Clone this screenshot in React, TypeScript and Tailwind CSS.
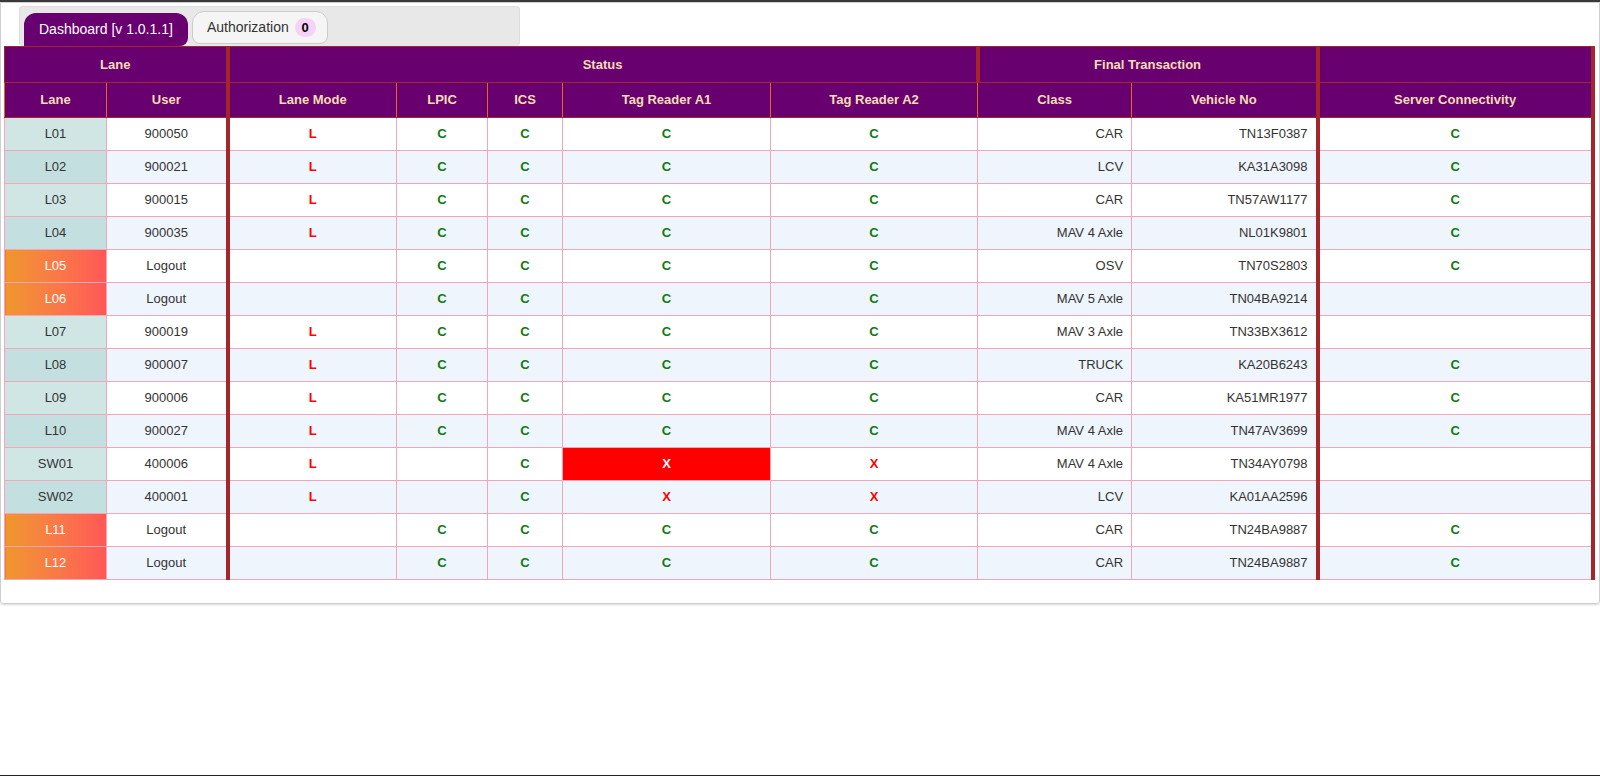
import React from "react";

type Row = {
  lane: string;
  user: string;
  mode: string;
  lpic: string;
  ics: string;
  a1: string;
  a2: string;
  cls: string;
  veh: string;
  srv: string;
  a1Alert?: boolean;
};

const rows: Row[] = [
  { lane: "L01", user: "900050", mode: "L", lpic: "C", ics: "C", a1: "C", a2: "C", cls: "CAR", veh: "TN13F0387", srv: "C" },
  { lane: "L02", user: "900021", mode: "L", lpic: "C", ics: "C", a1: "C", a2: "C", cls: "LCV", veh: "KA31A3098", srv: "C" },
  { lane: "L03", user: "900015", mode: "L", lpic: "C", ics: "C", a1: "C", a2: "C", cls: "CAR", veh: "TN57AW1177", srv: "C" },
  { lane: "L04", user: "900035", mode: "L", lpic: "C", ics: "C", a1: "C", a2: "C", cls: "MAV 4 Axle", veh: "NL01K9801", srv: "C" },
  { lane: "L05", user: "Logout", mode: "", lpic: "C", ics: "C", a1: "C", a2: "C", cls: "OSV", veh: "TN70S2803", srv: "C" },
  { lane: "L06", user: "Logout", mode: "", lpic: "C", ics: "C", a1: "C", a2: "C", cls: "MAV 5 Axle", veh: "TN04BA9214", srv: "" },
  { lane: "L07", user: "900019", mode: "L", lpic: "C", ics: "C", a1: "C", a2: "C", cls: "MAV 3 Axle", veh: "TN33BX3612", srv: "" },
  { lane: "L08", user: "900007", mode: "L", lpic: "C", ics: "C", a1: "C", a2: "C", cls: "TRUCK", veh: "KA20B6243", srv: "C" },
  { lane: "L09", user: "900006", mode: "L", lpic: "C", ics: "C", a1: "C", a2: "C", cls: "CAR", veh: "KA51MR1977", srv: "C" },
  { lane: "L10", user: "900027", mode: "L", lpic: "C", ics: "C", a1: "C", a2: "C", cls: "MAV 4 Axle", veh: "TN47AV3699", srv: "C" },
  { lane: "SW01", user: "400006", mode: "L", lpic: "", ics: "C", a1: "X", a2: "X", cls: "MAV 4 Axle", veh: "TN34AY0798", srv: "", a1Alert: true },
  { lane: "SW02", user: "400001", mode: "L", lpic: "", ics: "C", a1: "X", a2: "X", cls: "LCV", veh: "KA01AA2596", srv: "" },
  { lane: "L11", user: "Logout", mode: "", lpic: "C", ics: "C", a1: "C", a2: "C", cls: "CAR", veh: "TN24BA9887", srv: "C" },
  { lane: "L12", user: "Logout", mode: "", lpic: "C", ics: "C", a1: "C", a2: "C", cls: "CAR", veh: "TN24BA9887", srv: "C" },
];

function Mark({ v, alert }: { v: string; alert?: boolean }) {
  if (!v) return null;
  if (alert) return <span className="font-bold text-white">{v}</span>;
  return <span className={v === "C" ? "font-bold text-[#0f7a12]" : "font-bold text-[#ff0000]"}>{v}</span>;
}

const th1 = "h-[36px] p-0 border border-[#a3262a] text-[13px] font-bold text-[#f5deb3]";
const th2 = "h-[35px] p-0 border border-[#e8661a] border-b-[#a3262a] border-t-[#a3262a] text-[13px] font-bold text-[#f5deb3]";
const td = "h-[33px] p-0 border border-[#f4a6b8] text-center";

export default function App() {
  return (
    <div className="h-[776px] flex flex-col bg-white text-[13px] text-[#333]" style={{ fontFamily: '"Liberation Sans", Arial, sans-serif' }}>
      <div className="h-[2px] bg-[#3a3a3a]" />
      <div className="border border-[#cfcfcf] rounded-b-[3px] shadow-[0_1px_2px_rgba(0,0,0,0.15)] pt-[3px] pb-[23px] pl-[3px] pr-[4px]">
        <div className="ml-[15px] w-[501px] h-[40px] bg-[#e8e8e8] border border-b-0 border-[#dddddd] rounded-[4px] flex items-end pl-[4px] gap-[4px]">
          <div className="w-[164px] h-[33px] bg-[#690070] rounded-t-[12px] rounded-br-[8px] flex items-center pl-[15px] text-[14px] text-white">
            Dashboard [v 1.0.1.1]
          </div>
          <div className="w-[136px] h-[33px] mb-[2px] bg-[#f5f5f5] border border-[#cccccc] rounded-t-[12px] rounded-b-[8px] flex items-center pl-[14px] gap-[6px] text-[14px] text-[#333]">
            Authorization
            <span className="w-[21px] h-[19px] rounded-full bg-[#f6d2f8] flex items-center justify-center text-[13px] font-bold text-black">0</span>
          </div>
        </div>
        <table className="w-[1588px] table-fixed border-collapse">
          <colgroup>
            <col className="w-[102px]" />
            <col className="w-[121px]" />
            <col className="w-[169px]" />
            <col className="w-[91px]" />
            <col className="w-[75px]" />
            <col className="w-[208px]" />
            <col className="w-[207px]" />
            <col className="w-[154px]" />
            <col className="w-[186px]" />
            <col className="w-[275px]" />
          </colgroup>
          <thead className="bg-[#690070]">
            <tr>
              <th colSpan={2} className={`${th1} border-r-4`}>Lane</th>
              <th colSpan={5} className={`${th1} border-r-4`}>Status</th>
              <th colSpan={2} className={`${th1} border-r-4`}>Final Transaction</th>
              <th className={`${th1} border-r-4`}></th>
            </tr>
            <tr>
              <th className={th2}>Lane</th>
              <th className={`${th2} border-r-4 border-r-[#a3262a]`}>User</th>
              <th className={th2}>Lane Mode</th>
              <th className={th2}>LPIC</th>
              <th className={th2}>ICS</th>
              <th className={th2}>Tag Reader A1</th>
              <th className={th2}>Tag Reader A2</th>
              <th className={th2}>Class</th>
              <th className={`${th2} border-r-4 border-r-[#a3262a]`}>Vehicle No</th>
              <th className={`${th2} border-r-4 border-r-[#a3262a]`}>Server Connectivity</th>
            </tr>
          </thead>
          <tbody>
            {rows.map((r, i) => {
              const logout = r.user === "Logout";
              const laneBg = logout
                ? "bg-linear-to-r from-[#f0962c] to-[#ff5656] text-white"
                : i % 2 === 0
                ? "bg-[#cfe6e4]"
                : "bg-[#c3dfdf]";
              return (
                <tr key={r.lane} className={i % 2 === 0 ? "bg-white" : "bg-[#eff5fd]"}>
                  <td className={`${td} ${laneBg}`}>{r.lane}</td>
                  <td className={`${td} border-r-4 border-r-[#a3262a]`}>{r.user}</td>
                  <td className={td}><Mark v={r.mode} /></td>
                  <td className={td}><Mark v={r.lpic} /></td>
                  <td className={td}><Mark v={r.ics} /></td>
                  <td className={`${td} ${r.a1Alert ? "bg-[#ff0000]" : ""}`}><Mark v={r.a1} alert={r.a1Alert} /></td>
                  <td className={td}><Mark v={r.a2} /></td>
                  <td className={`${td} text-right pr-[8px]`}>{r.cls}</td>
                  <td className={`${td} text-right pr-[8px] border-r-4 border-r-[#a3262a]`}>{r.veh}</td>
                  <td className={`${td} border-r-4 border-r-[#a3262a]`}><Mark v={r.srv} /></td>
                </tr>
              );
            })}
          </tbody>
        </table>
      </div>
      <div className="flex-1" />
      <div className="h-px bg-[#222]" />
    </div>
  );
}
